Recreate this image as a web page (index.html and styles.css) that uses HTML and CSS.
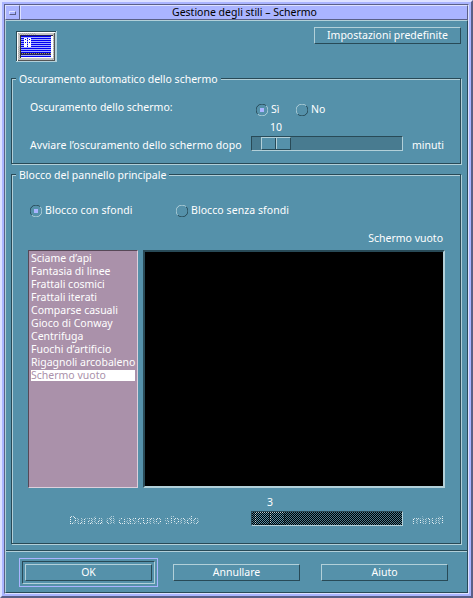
FILE: index.html
```html
<!DOCTYPE html>
<html lang="it">
<head>
<meta charset="utf-8">
<title>Gestione degli stili – Schermo</title>
<link rel="stylesheet" href="styles.css">
</head>
<body>
<div class="frame"><div class="frame-inner">
  <header class="titlebar">
    <div class="menu-btn"><span class="dash"></span></div>
    <h1 class="title"><span>Gestione degli stili – Schermo</span></h1>
  </header>
  <main class="client">
    <div class="top">
      <svg class="icon" width="41" height="31" viewBox="0 0 41 31" shape-rendering="crispEdges">
        <defs>
          <pattern id="dots" width="2" height="2" patternUnits="userSpaceOnUse"><path d="M0 0h1v1H0zM1 1h1v1H1z" fill="#aaa"/></pattern>
          <pattern id="dither" width="2" height="2" patternUnits="userSpaceOnUse"><path d="M0 0h1v1H0z" fill="#a58c5a"/></pattern>
        </defs>
        <path d="M0 0h41v31H0z" fill="#b2d0d9"/>
        <path d="M0 0h40v1H1v29H0z" fill="#284a57"/>
        <path d="M1 1h38v29H1z" fill="#fff"/>
        <path d="M2 2h37v28H2z" fill="#555"/>
        <path d="M2 2h36v27H2z" fill="#c6c6c6"/>
        <path d="M2 2h18v2H2zM2 15h2v14H2zM36 3h2v26h-2z" fill="url(#dots)"/>
        <path d="M4 4h33v23H4z" fill="#333"/>
        <path d="M5 5h32v22H5z" fill="#fff"/>
        <path d="M5 5h30v21H5z" fill="#0000f0"/>
        <path d="M5 6.5h30M5 8.5h30M5 10.5h30M5 12.5h30M5 14.5h30M5 16.5h30M5 18.5h30M5 20.5h30M5 24.5h30" stroke="#a3adff"/>
        <path d="M5 4h31v1H5zM5 22h30v2H5z" fill="#202060"/>
        <path d="M5 22h30v2H5z" fill="url(#dither)"/>
        <path d="M9 7h2v9H9zM12 7h3v9h-3zM8 7h1v9H8z" fill="#fff"/>
        <path d="M9 8h1v1H9zM9 11h1v1H9zM13 8h1v1h-1zM13 11h1v1h-1z" fill="#0000f0"/>
      </svg>
      <button class="btn defaults"><span>Impostazioni predefinite</span></button>
    </div>

    <section class="group auto">
      <h2 class="legend">Oscuramento automatico dello schermo</h2>
      <div class="row blank-row">
        <span class="blank-label">Oscuramento dello schermo:</span>
        <svg class="radio" width="12" height="12"><use href="#on"/></svg><span class="yes">Sì</span>
        <svg class="radio" width="12" height="12"><use href="#off"/></svg><span>No</span>
      </div>
      <div class="value v10">10</div>
      <div class="row slider-row">
        <span class="slider-label">Avviare l’oscuramento dello schermo dopo</span>
        <div class="slider"><div class="thumb"></div></div>
        <span class="unit">minuti</span>
      </div>
    </section>

    <section class="group lock">
      <h2 class="legend">Blocco del pannello principale</h2>
      <div class="row lock-row">
        <svg class="radio" width="12" height="12"><use href="#on"/></svg><span class="with">Blocco con sfondi</span>
        <svg class="radio" width="12" height="12"><use href="#off"/></svg><span class="without">Blocco senza sfondi</span>
      </div>
      <div class="caption"><span>Schermo vuoto</span></div>
      <div class="panes">
        <ul class="list">
          <li>Sciame d’api</li>
          <li>Fantasia di linee</li>
          <li>Frattali cosmici</li>
          <li>Frattali iterati</li>
          <li>Comparse casuali</li>
          <li>Gioco di Conway</li>
          <li>Centrifuga</li>
          <li>Fuochi d’artificio</li>
          <li>Rigagnoli arcobaleno</li>
          <li class="selected">Schermo vuoto</li>
        </ul>
        <div class="preview"></div>
      </div>
      <div class="value v3">3</div>
      <div class="row slider-row">
        <span class="slider-label dim dur">Durata di ciascuno sfondo</span>
        <div class="slider off"><div class="thumb"></div></div>
        <span class="unit dim">minuti</span>
      </div>
    </section>

    <footer class="actions">
      <div class="default-ring"><div class="sunken"><button class="btn act">OK</button></div></div>
      <button class="btn act cancel">Annullare</button>
      <button class="btn act">Aiuto</button>
    </footer>
  </main>
</div></div>
<svg class="defs" width="0" height="0">
  <g id="on" fill="none">
    <path d="M1.8 10.2A5.5 5.5 0 0 1 10.2 1.8" stroke="#284a57"/>
    <path d="M10.2 1.8A5.5 5.5 0 0 1 1.8 10.2" stroke="#b2d0d9"/>
    <path d="M4 4h4v4H4z" fill="#aab4ff"/>
  </g>
  <g id="off" fill="none">
    <path d="M1.8 10.2A5.5 5.5 0 0 1 10.2 1.8" stroke="#b2d0d9"/>
    <path d="M10.2 1.8A5.5 5.5 0 0 1 1.8 10.2" stroke="#284a57"/>
  </g>
</svg>
</body>
</html>
```
FILE: styles.css
```css
:root {
  --teal: #5591aa;
  --hi: #b2d0d9;
  --lo: #284a57;
  --trough: #487b90;
  --lav: #aab4ff;
  --lav-hi: #dde1ff;
  --lav-lo: #5a5f87;
}
* { box-sizing: border-box; margin: 0; padding: 0; }
body {
  width: 473px; height: 598px; overflow: hidden;
  font: 10.5px/14px "Noto Sans", sans-serif;
  color: #fff; white-space: nowrap;
}
h1, h2 { font: inherit; }
.defs { display: block; }
.frame {
  height: 598px; padding: 2px; background: var(--lav);
  border: 2px solid; border-color: var(--lav-hi) var(--lav-lo) var(--lav-lo) var(--lav-hi);
}
.frame-inner {
  height: 590px; display: flex; flex-direction: column;
  border: 1px solid; border-color: var(--lav-lo) var(--lav-hi) var(--lav-hi) var(--lav-lo);
}
.titlebar { display: flex; height: 15px; color: #000; }
.menu-btn, .title {
  border: 1px solid; border-color: var(--lav-hi) var(--lav-lo) var(--lav-lo) var(--lav-hi);
}
.menu-btn { width: 15px; padding: 5px 0 0 3px; }
.dash {
  display: block; width: 7px; height: 4px;
  border: 1px solid; border-color: var(--lav-hi) var(--lav-lo) var(--lav-lo) var(--lav-hi);
}
.title { flex: 1; text-align: center; line-height: 12px; padding-left: 1px; }
.client {
  flex: 1; background: var(--teal);
  border: 1px solid; border-color: var(--hi) var(--lo) var(--lo) var(--hi);
}
.top { display: flex; justify-content: space-between; height: 57px; padding: 6px 6px 0 10px; }
.icon { margin-top: 4px; }
.btn {
  display: block; height: 17px; background: var(--teal); color: #fff;
  font: inherit; text-align: center; line-height: 15px;
  border: 1px solid; border-color: var(--hi) var(--lo) var(--lo) var(--hi);
}
.defaults { width: 147px; }
.group {
  width: 450px; margin-left: 5px;
  border: 1px solid var(--lo);
  box-shadow: 1px 1px 0 var(--hi), inset 1px 1px 0 var(--hi);
}
.auto { height: 86px; }
.lock { height: 370px; margin-top: 10px; }
.legend {
  width: max-content; height: 13px; margin: -7px 0 0 4px; padding: 0 3px;
  background: var(--teal);
}
.row { display: flex; align-items: flex-start; }
.radio { flex: none; }
.blank-row { margin-top: 15px; padding-left: 18px; height: 20px; }
.blank-label { width: 226px; }
.blank-row .radio { margin-top: 4px; }
.blank-row .radio + span { margin: 2px 0 0 3px; }
.blank-row .yes { width: 25px; }
.value { width: 40px; height: 13px; text-align: center; }
.v10 { margin-left: 244px; }
.slider-row { margin-top: 3px; padding-left: 18px; }
.slider-label { width: 221px; margin-top: 2px; letter-spacing: 0.07px; }
.slider {
  width: 152px; height: 15px; background: var(--trough); padding-left: 9px;
  border: 1px solid; border-color: var(--lo) var(--hi) var(--hi) var(--lo);
}
.thumb {
  width: 30px; height: 13px;
  background: linear-gradient(90deg, transparent 13px, var(--lo) 13px 14px, var(--hi) 14px 15px, transparent 15px) var(--teal);
  border: 1px solid; border-color: var(--hi) var(--lo) var(--lo) var(--hi);
}
.unit { margin: 2px 0 0 9px; }
.lock-row { margin-top: 21px; padding-left: 18px; height: 15px; }
.lock-row .radio { margin-top: 3px; }
.lock-row .radio + span { margin: 1px 0 0 3px; letter-spacing: 0.07px; }
.lock-row .with { width: 131px; }
.caption { height: 19px; margin-top: 14px; padding-right: 17px; text-align: right; }
.panes { display: flex; gap: 5px; padding-left: 16px; }
.list {
  width: 110px; height: 238px; padding: 0 2px; list-style: none; background: #aa91aa;
  border: 1px solid; border-color: #574857 #ddd0dd #ddd0dd #574857;
}
.list li { height: 13px; line-height: 14px; }
.list .selected {
  height: 11px; margin-top: 2px; line-height: 10px;
  background: #fff; color: #aa91aa;
}
.preview {
  width: 302px; height: 238px; background: #000;
  border: 2px solid; border-color: var(--lo) var(--hi) var(--hi) var(--lo);
}
.v3 { margin: 7px 0 0 238px; }
.dim {
  color: transparent;
  background: repeating-conic-gradient(#fff 0 25%, transparent 0 50%) 0 0 / 2px 2px;
  -webkit-background-clip: text; background-clip: text;
}
.dur { width: 182px; margin-left: 39px; }
.off { position: relative; padding-left: 3px; }
.off::after {
  content: ""; position: absolute; inset: 0;
  background: repeating-conic-gradient(#000 0 25%, transparent 0 50%) 0 0 / 2px 2px;
}
.actions {
  display: flex; align-items: center;
  width: 461px; height: 41px; margin-top: 6px; padding: 2px 0 0 13px;
  border-top: 1px solid var(--lo); box-shadow: inset 0 1px 0 var(--hi);
}
.act { width: 127px; }
.cancel { margin: 0 21px 0 15px; }
.default-ring { border: 1px solid var(--lav); padding: 2px; }
.sunken {
  padding: 2px; border: 1px solid;
  border-color: var(--lo) var(--hi) var(--hi) var(--lo);
}
```
